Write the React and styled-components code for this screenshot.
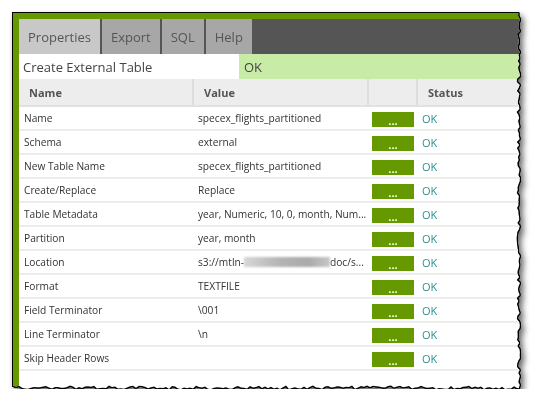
import styled, { createGlobalStyle } from "styled-components";

const GlobalStyle = createGlobalStyle`
  body {
    margin: 0;
    background: #ffffff;
    font-family: "Open Sans", "DejaVu Sans", sans-serif;
  }
`;

const tabs = ["Properties", "Export", "SQL", "Help"];

const rows = [
  { name: "Name", value: "specex_flights_partitioned" },
  { name: "Schema", value: "external" },
  { name: "New Table Name", value: "specex_flights_partitioned" },
  { name: "Create/Replace", value: "Replace" },
  { name: "Table Metadata", value: "year, Numeric, 10, 0, month, Num..." },
  { name: "Partition", value: "year, month" },
  { name: "Location", value: "location" },
  { name: "Format", value: "TEXTFILE" },
  { name: "Field Terminator", value: "\\001" },
  { name: "Line Terminator", value: "\\n" },
  { name: "Skip Header Rows", value: "" },
];

// jagged right and bottom edges, like a torn screenshot
function tornEdge(w, h) {
  let seed = 7;
  const rnd = () => {
    seed = (seed * 9301 + 49297) % 233280;
    return seed / 233280;
  };
  const pts = ["0px 0px"];
  for (let y = 0; y <= h; y += 3) {
    pts.push(`${(w - rnd() * 3.5).toFixed(1)}px ${y}px`);
  }
  for (let x = w; x >= 0; x -= 3) {
    pts.push(`${x}px ${(h - rnd() * 3.5).toFixed(1)}px`);
  }
  pts.push(`0px ${h}px`);
  return `polygon(${pts.join(", ")})`;
}

export default function App() {
  return (
    <Page>
      <GlobalStyle />
      <Shadow>
        <Frame $clip={tornEdge(507, 376)}>
          <TabBar>
            {tabs.map((t, i) => (
              <Tab key={t} $active={i === 0}>
                {t}
              </Tab>
            ))}
          </TabBar>
          <TitleRow>
            <TitleCell>Create External Table</TitleCell>
            <StateCell>OK</StateCell>
          </TitleRow>
          <HeaderRow>
            <HeadCell>Name</HeadCell>
            <HeadCell $divider>Value</HeadCell>
            <HeadCell $divider />
            <HeadCell $divider>Status</HeadCell>
          </HeaderRow>
          {rows.map((r) => (
            <Row key={r.name}>
              <Cell>{r.name}</Cell>
              <ValueCell>
                {r.value === "location" ? (
                  <>
                    s3://mtln-
                    <Redacted />
                    doc/s...
                  </>
                ) : (
                  r.value
                )}
              </ValueCell>
              <ButtonCell>
                <EditButton>...</EditButton>
              </ButtonCell>
              <StatusCell>OK</StatusCell>
            </Row>
          ))}
        </Frame>
      </Shadow>
    </Page>
  );
}

const Page = styled.div`
  padding: 13px 0 0 13px;
`;

const Shadow = styled.div`
  width: 507px;
  filter: drop-shadow(1px 0 0 #000) drop-shadow(-1px 0 0 #000)
    drop-shadow(0 1px 0 #000) drop-shadow(0 -1px 0 #000)
    drop-shadow(3px 4px 3px rgba(0, 0, 0, 0.6));
`;

const Frame = styled.div`
  width: 507px;
  height: 376px;
  box-sizing: border-box;
  background: #ffffff;
  border-top: 6px solid #669900;
  border-left: 6px solid #669900;
  clip-path: ${(p) => p.$clip};
  display: flex;
  flex-direction: column;
`;

const TabBar = styled.div`
  display: flex;
  gap: 2px;
  height: 35px;
  background: #555555;
`;

const Tab = styled.div`
  display: flex;
  align-items: center;
  padding: 0 9px;
  font-size: 13px;
  color: #555555;
  background: ${(p) => (p.$active ? "#c8c8c8" : "#a7a7a7")};
`;

const TitleRow = styled.div`
  display: grid;
  grid-template-columns: 220px 1fr;
  height: 25px;
  font-size: 13px;
  color: #444444;
`;

const TitleCell = styled.div`
  display: flex;
  align-items: center;
  padding-left: 4px;
  background: #ffffff;
`;

const StateCell = styled.div`
  display: flex;
  align-items: center;
  padding-left: 5px;
  background: #c8eba8;
`;

const HeaderRow = styled.div`
  display: grid;
  grid-template-columns: 173px 175px 49px 1fr;
  height: 28px;
  box-sizing: border-box;
  background: #ededed;
  border-bottom: 2px solid #e2e2e2;
`;

const HeadCell = styled.div`
  display: flex;
  align-items: center;
  padding-left: 10px;
  font-size: 11px;
  font-weight: bold;
  color: #555555;
  border-left: ${(p) => (p.$divider ? "2px solid #dedede" : "none")};
`;

const Row = styled.div`
  display: grid;
  grid-template-columns: 173px 175px 49px 1fr;
  height: 24px;
  box-sizing: border-box;
  border-bottom: 2px solid #ededed;
  font-size: 10.2px;
  color: #333333;
`;

const Cell = styled.div`
  display: flex;
  align-items: center;
  padding-left: 5px;
  white-space: nowrap;
  overflow: hidden;
`;

const ValueCell = styled(Cell)`
  padding-left: 6px;
`;

const Redacted = styled.span`
  display: inline-block;
  width: 86px;
  height: 10px;
  background: linear-gradient(90deg, #d8d8d8, #b5b5b5 40%, #aaaaaa 75%, #c8c8c8);
  filter: blur(1px);
`;

const ButtonCell = styled.div`
  display: flex;
  align-items: center;
  padding-left: 5px;
  padding-top: 2px;
`;

const EditButton = styled.div`
  width: 42px;
  height: 15px;
  background: #669900;
  color: #ffffff;
  font-size: 11px;
  font-weight: bold;
  line-height: 17px;
  text-align: center;
`;

const StatusCell = styled.div`
  display: flex;
  align-items: center;
  padding-left: 6px;
  font-size: 11px;
  color: #2b9590;
`;
